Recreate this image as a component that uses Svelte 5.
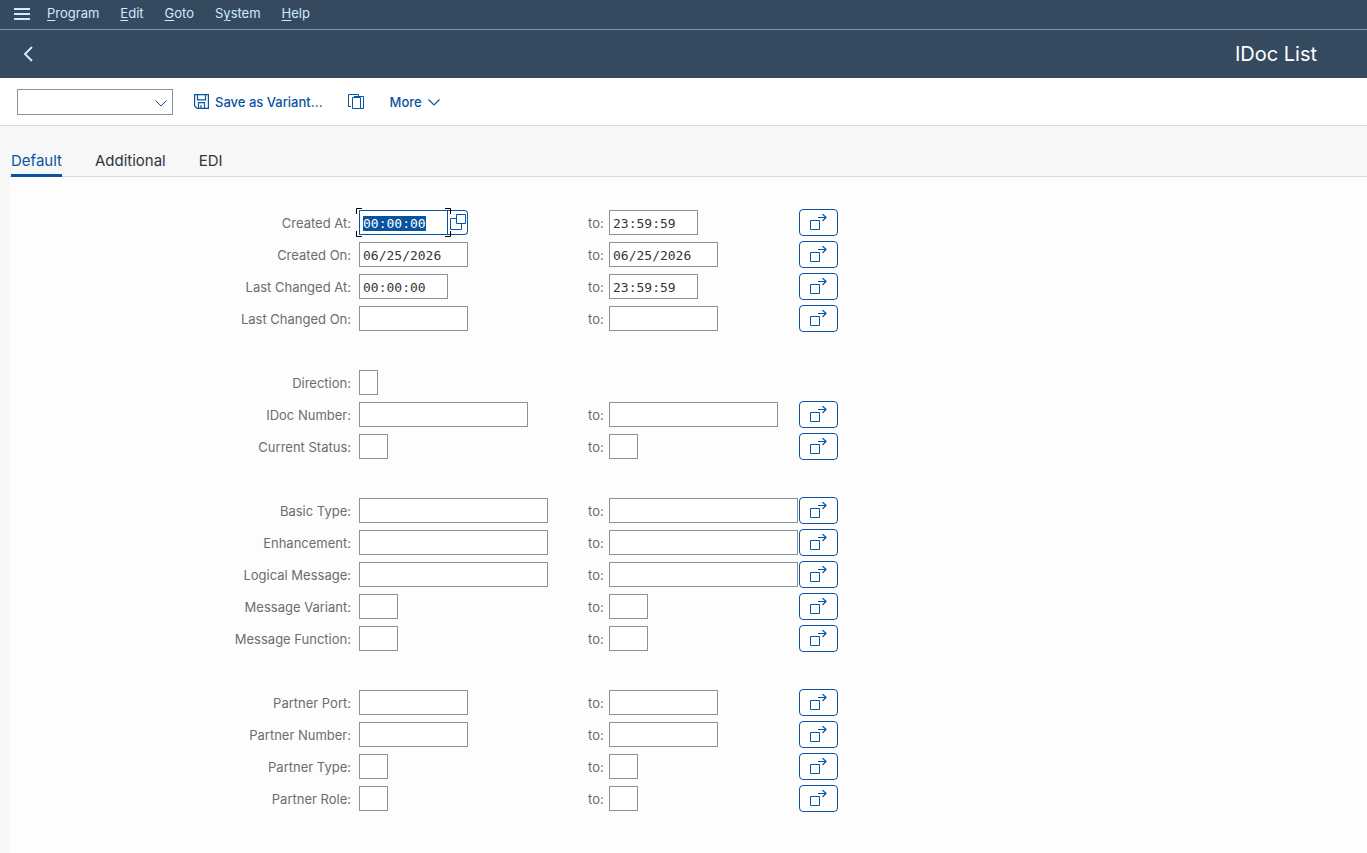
<script>
  import { onMount } from "svelte";

  const menus = [
    { before: "", key: "P", after: "rogram" },
    { before: "", key: "E", after: "dit" },
    { before: "", key: "G", after: "oto" },
    { before: "S", key: "y", after: "stem" },
    { before: "", key: "H", after: "elp" },
  ];

  const tabs = ["Default", "Additional", "EDI"];
  let activeTab = $state("Default");

  // size is the field length in characters
  let groups = $state([
    [
      { id: "cretim", label: "Created At:", size: 8, low: "00:00:00", high: "23:59:59", range: true, help: true },
      { id: "credat", label: "Created On:", size: 10, low: "06/25/2026", high: "06/25/2026", range: true },
      { id: "updtim", label: "Last Changed At:", size: 8, low: "00:00:00", high: "23:59:59", range: true },
      { id: "upddat", label: "Last Changed On:", size: 10, low: "", high: "", range: true },
    ],
    [
      { id: "direct", label: "Direction:", size: 1, low: "", high: "", range: false },
      { id: "docnum", label: "IDoc Number:", size: 16, low: "", high: "", range: true },
      { id: "status", label: "Current Status:", size: 2, low: "", high: "", range: true },
    ],
    [
      { id: "idoctp", label: "Basic Type:", size: 18, low: "", high: "", range: true },
      { id: "cimtyp", label: "Enhancement:", size: 18, low: "", high: "", range: true },
      { id: "mestyp", label: "Logical Message:", size: 18, low: "", high: "", range: true },
      { id: "mescod", label: "Message Variant:", size: 3, low: "", high: "", range: true },
      { id: "mesfct", label: "Message Function:", size: 3, low: "", high: "", range: true },
    ],
    [
      { id: "ppor", label: "Partner Port:", size: 10, low: "", high: "", range: true },
      { id: "pprn", label: "Partner Number:", size: 10, low: "", high: "", range: true },
      { id: "pprt", label: "Partner Type:", size: 2, low: "", high: "", range: true },
      { id: "ppfc", label: "Partner Role:", size: 2, low: "", high: "", range: true },
    ],
  ]);

  function fieldWidth(size) {
    return size * 10 + 9;
  }

  onMount(() => {
    const first = document.getElementById("cretim-low");
    first.focus();
    first.select();
  });
</script>

<div class="page">
  <nav class="menubar">
    <button type="button" class="menu-icon" aria-label="Menu">
      <svg width="16" height="12" viewBox="0 0 16 12" fill="#d1e8ff">
        <path d="M0 0h16v2H0zM0 5h16v2H0zM0 10h16v2H0z" />
      </svg>
    </button>
    {#each menus as menu}
      <button type="button" class="menu-item">{menu.before}<u>{menu.key}</u>{menu.after}</button>
    {/each}
  </nav>

  <header class="header">
    <button type="button" class="back" aria-label="Back">
      <svg width="10" height="16" viewBox="0 0 10 16" fill="none" stroke="#d1e8ff" stroke-width="2">
        <path d="M9 1 2 8l7 7" />
      </svg>
    </button>
    <h1>IDoc List</h1>
  </header>

  <div class="toolbar">
    <div class="command">
      <select aria-label="Command">
        <option></option>
      </select>
      <svg class="command-arrow" width="12" height="7" viewBox="0 0 12 7" fill="none" stroke="#0854a0">
        <path d="M.5.5 6 6 11.5.5" />
      </svg>
    </div>
    <button type="button" class="tool">
      <svg width="15" height="15" viewBox="0 0 15 15" fill="none" stroke="#0854a0" stroke-width="1.2">
        <path d="M.6.6h13.8v13.8H3.1L.6 11.9zM3.5.6v5.3h8V.6M4.5 14.4V8.6h6v5.8M7 11v3" />
      </svg>
      <span>Save as Variant...</span>
    </button>
    <button type="button" class="tool copy" aria-label="Get Variant">
      <svg width="16" height="15" viewBox="0 0 16 15" fill="none" stroke="#0854a0">
        <path d="M4.5 3.5h8v11h-8zM6 2.5h9.5v12h-3M3 12.5H.5V.5h10v2" />
      </svg>
    </button>
    <button type="button" class="tool more">
      <span>More</span>
      <svg width="12" height="7" viewBox="0 0 12 7" fill="none" stroke="#0854a0" stroke-width="1.2">
        <path d="M.5.5 6 6 11.5.5" />
      </svg>
    </button>
  </div>

  <main class="content">
    <div class="tabs" role="tablist">
      {#each tabs as tab}
        <button
          type="button"
          role="tab"
          class="tab"
          class:active={tab === activeTab}
          aria-selected={tab === activeTab}
          onclick={() => (activeTab = tab)}
        >
          {tab}
        </button>
      {/each}
    </div>

    <form class="panel">
      {#each groups as group}
        <div class="group">
          {#each group as row}
            <div class="row">
              <label class="label" for="{row.id}-low">{row.label}</label>
              <div class="low">
                <div class="field" class:focused={row.help}>
                  <input
                    id="{row.id}-low"
                    type="text"
                    maxlength={row.size}
                    style="width: {fieldWidth(row.size)}px"
                    bind:value={row.low}
                    autocomplete="off"
                    spellcheck="false"
                  />
                  {#if row.help}
                    <svg class="corners" width="95" height="29" viewBox="0 0 95 29" fill="none" stroke="#000">
                      <path d="M6 .5H.5V6M89 .5h5.5V6M.5 23v5.5H6M94.5 23v5.5H89" />
                    </svg>
                    <button type="button" class="help" aria-label="Value help">
                      <svg width="16" height="16" viewBox="0 0 16 16" fill="none" stroke="#0854a0">
                        <path d="M6.5.5h9v9h-9zM6.5 4.5h-6v11h11v-6" />
                      </svg>
                    </button>
                  {/if}
                </div>
              </div>
              {#if row.range}
                <label class="to" for="{row.id}-high">to:</label>
                <div class="high">
                  <input
                    id="{row.id}-high"
                    type="text"
                    maxlength={row.size}
                    style="width: {fieldWidth(row.size)}px"
                    bind:value={row.high}
                    autocomplete="off"
                    spellcheck="false"
                  />
                </div>
                <button type="button" class="multi" aria-label="Multiple selection">
                  <svg width="17" height="17" viewBox="0 0 17 17" fill="none" stroke="#0854a0">
                    <path d="M.5 6.5h9v9h-9z" />
                    <path d="M8 3.5h8M12.5 0 16 3.5 12.5 7" stroke-width="1.2" />
                  </svg>
                </button>
              {/if}
            </div>
          {/each}
        </div>
      {/each}
    </form>
  </main>
</div>

<style>
  :global(body) {
    background: #f7f7f7;
  }

  .page {
    display: flex;
    flex-direction: column;
    min-height: 100vh;
    font-family: Inter, "Noto Sans", sans-serif;
    font-size: 13px;
    color: #32363a;
  }

  button {
    margin: 0;
    padding: 0;
    border: none;
    background: none;
    font: inherit;
    color: inherit;
    cursor: pointer;
  }

  svg {
    display: block;
  }

  /* Menu bar */
  .menubar {
    display: flex;
    align-items: center;
    gap: 21px;
    height: 29px;
    padding-left: 14px;
    background: #354a5f;
    border-bottom: 1px solid #7996b8;
    color: #d1e8ff;
  }

  .menu-icon {
    margin-right: -4px;
    padding-bottom: 2px;
  }

  .menu-item {
    height: 29px;
    padding-bottom: 3px;
  }

  .menu-item u {
    text-underline-offset: 2px;
  }

  /* Title bar */
  .header {
    display: flex;
    align-items: center;
    justify-content: space-between;
    height: 48px;
    padding: 0 50px 0 23px;
    background: #354a5f;
  }

  h1 {
    margin: 0;
    font-size: 20px;
    font-weight: 400;
    color: #fff;
  }

  /* Toolbar */
  .toolbar {
    display: flex;
    align-items: center;
    height: 47px;
    padding-left: 17px;
    background: #fff;
    border-bottom: 1px solid #d9d9d9;
    color: #0854a0;
  }

  .command {
    position: relative;
    margin-right: 21px;
  }

  .command select {
    display: block;
    width: 156px;
    height: 26px;
    border: 1px solid #89919a;
    border-radius: 0;
    background: #fff;
    appearance: none;
  }

  .command-arrow {
    position: absolute;
    top: 11px;
    right: 6px;
    pointer-events: none;
  }

  .tool {
    display: flex;
    align-items: center;
    gap: 6px;
    height: 26px;
    font-weight: 500;
  }

  .tool.copy {
    margin: 0 26px 0 25px;
  }

  .tool.more svg {
    padding-top: 2px;
  }

  /* Tab strip */
  .content {
    display: flex;
    flex: 1;
    flex-direction: column;
    padding-left: 9px;
  }

  .tabs {
    display: flex;
    align-items: flex-end;
    gap: 33px;
    height: 50px;
    padding-left: 2px;
    border-bottom: 1px solid #d9d9d9;
  }

  .tab {
    height: 30px;
    margin-bottom: -1px;
    border-bottom: 3px solid transparent;
    font-size: 15px;
  }

  .tab.active {
    border-color: #0854a0;
    color: #0854a0;
  }

  /* Selection fields */
  .panel {
    display: flex;
    flex: 1;
    flex-direction: column;
    gap: 32px;
    padding: 29px 0 36px;
    background: #fdfdfd;
  }

  .row {
    display: grid;
    grid-template-columns: 342px 237px 21px 190px 39px;
    align-items: center;
    height: 32px;
  }

  .label {
    padding-top: 2px;
    text-align: right;
    color: #6a6d70;
  }

  .to {
    padding-top: 2px;
    color: #6a6d70;
  }

  .low {
    padding-left: 8px;
  }

  .field {
    position: relative;
    display: flex;
  }

  input {
    display: block;
    box-sizing: border-box;
    height: 25px;
    padding: 2px 3px 0;
    border: 1px solid #89919a;
    border-radius: 0;
    outline: none;
    background: #fff;
    color: #32363a;
    font-family: "DejaVu Sans Mono", monospace;
    font-size: 13px;
  }

  input::selection {
    background: #0854a0;
    color: #fff;
  }

  .focused input {
    border-color: #0854a0;
  }

  .corners {
    position: absolute;
    top: -2px;
    left: -3px;
    pointer-events: none;
  }

  .help {
    display: flex;
    align-items: center;
    justify-content: flex-end;
    width: 20px;
    height: 25px;
    padding-right: 1px;
    border: 1px solid #0854a0;
    border-left: none;
    border-radius: 0 4px 4px 0;
    background: #fff;
  }

  .multi {
    display: flex;
    align-items: center;
    justify-content: center;
    width: 39px;
    height: 27px;
    border: 1px solid #0854a0;
    border-radius: 4px;
    background: #fff;
  }
</style>
